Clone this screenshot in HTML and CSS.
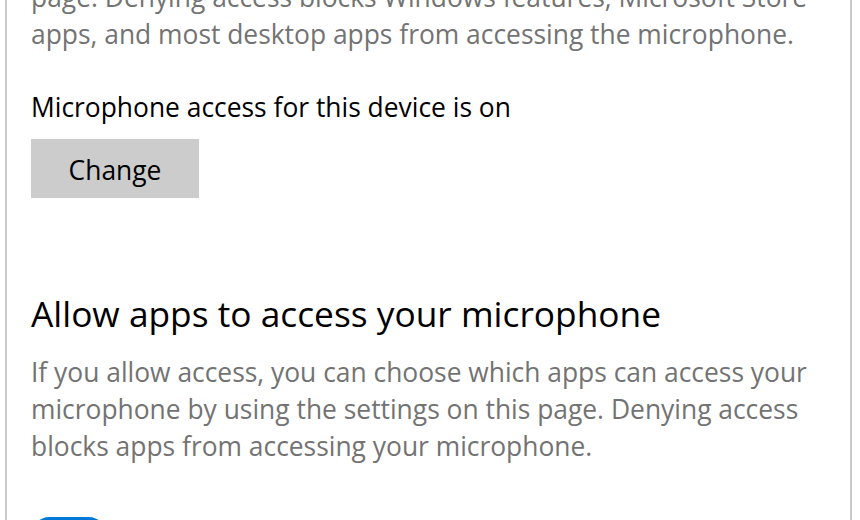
FILE: index.html
```html
<!DOCTYPE html>
<html lang="en">
<head>
<meta charset="utf-8">
<title>Microphone privacy settings</title>
<link rel="stylesheet" href="styles.css">
</head>
<body>
<main class="panel">
  <p class="desc desc-top">page. Denying access blocks Windows features, Microsoft Store apps, and most desktop apps from accessing the microphone.</p>
  <p class="status">Microphone access for this device is on</p>
  <button class="btn" type="button">Change</button>
  <h2 class="heading">Allow apps to access your microphone</h2>
  <p class="desc">If you allow access, you can choose which apps can access your microphone by using the settings on this page. Denying access blocks apps from accessing your microphone.</p>
  <div class="toggle-row">
    <span class="toggle" role="switch" aria-checked="true" aria-label="Allow apps to access your microphone"><span class="knob"></span></span>
  </div>
</main>
</body>
</html>
```
FILE: styles.css
```css
html, body {
  margin: 0;
  padding: 0;
  background: #ffffff;
  height: 520px;
  overflow: hidden;
}

body {
  font-family: "Open Sans", "Noto Sans", "Liberation Sans", sans-serif;
  font-size: 26.4px;
  line-height: 37px;
  color: #000000;
}

.panel {
  box-sizing: border-box;
  height: 520px;
  margin: 0 8px 0 5px;
  border-left: 2px solid #c9c9c9;
  border-right: 2px solid #c9c9c9;
  padding: 0 16px 0 24px;
  overflow: hidden;
}

p, h2 {
  margin: 0;
}

.desc {
  color: #737373;
}

.desc-top {
  margin-top: -21px;
}

.status {
  margin-top: 36px;
}

.btn {
  display: block;
  margin-top: 13px;
  box-sizing: border-box;
  width: 168px;
  height: 59px;
  padding: 13px 0 9px;
  border: none;
  background: #cccccc;
  font: inherit;
  color: #000000;
  text-align: center;
}

.heading {
  margin-top: 92px;
  font-size: 35.3px;
  line-height: 46px;
  font-weight: 400;
  color: #000000;
}

.heading + .desc {
  margin-top: 18px;
}

.toggle-row {
  display: flex;
  align-items: center;
  margin-top: 52px;
}

.toggle {
  position: relative;
  display: block;
  box-sizing: border-box;
  width: 76px;
  height: 37px;
  border-radius: 19px;
  background: #0078d7;
}

.knob {
  position: absolute;
  top: 9px;
  right: 9px;
  width: 19px;
  height: 19px;
  border-radius: 50%;
  background: #ffffff;
}
```
